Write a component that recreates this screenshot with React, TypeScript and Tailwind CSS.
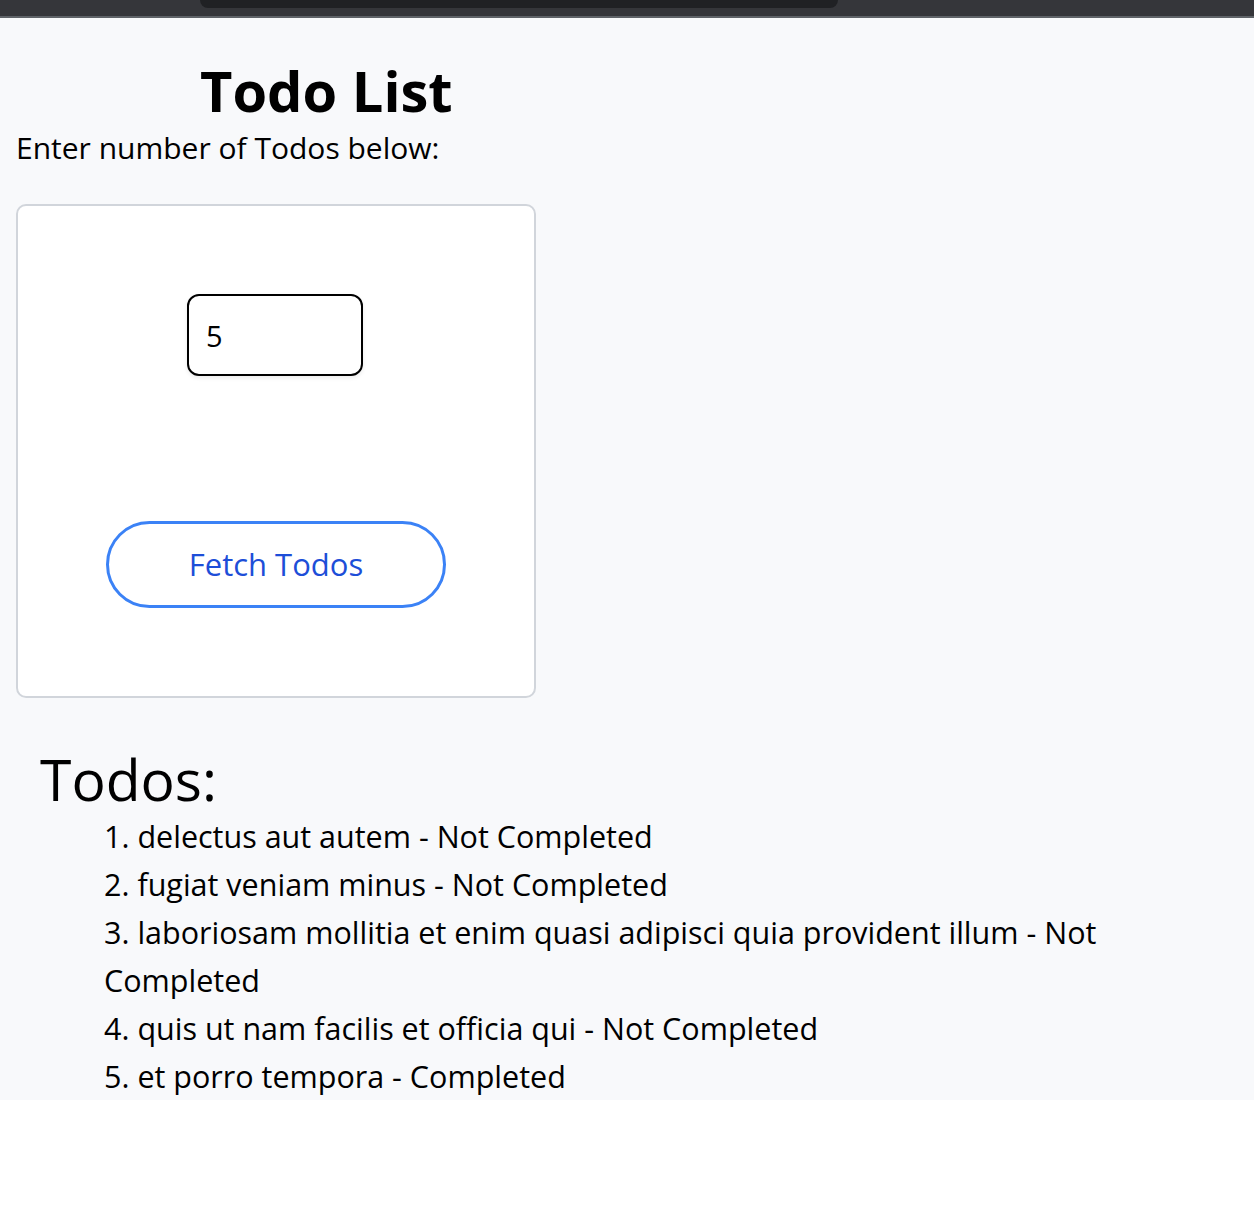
import React from 'react';

const TODOS = [
  { title: 'delectus aut autem', completed: false },
  { title: 'fugiat veniam minus', completed: false },
  { title: 'laboriosam mollitia et enim quasi adipisci quia provident illum', completed: false },
  { title: 'quis ut nam facilis et officia qui', completed: false },
  { title: 'et porro tempora', completed: true },
];

export default function App() {
  return (
    <div className="min-h-[1214px] bg-white text-black font-['Open_Sans',sans-serif]">
      {/* browser chrome strip */}
      <div className="h-[18px] bg-[#35363a] border-b-2 border-[#5f6368] pl-[200px]">
        <div className="w-[638px] h-[8px] bg-[#202124] rounded-b-[10px]"></div>
      </div>

      <div className="bg-[#f8f9fb]">
        <h1 className="pt-[36px] pl-[200px] text-[56px] leading-[72px] font-bold">Todo List</h1>
        <p className="mt-[4px] pl-[16px] text-[30px] leading-[36px]">Enter number of Todos below:</p>

        <div className="mt-[38px] ml-[16px] w-[520px] h-[494px] bg-white border-2 border-[#d1d5db] rounded-[10px] flex flex-col items-center pt-[88px]">
          <input
            type="number"
            defaultValue={5}
            className="-ml-[2px] w-[176px] h-[82px] border-2 border-black rounded-[12px] px-[17px] text-[29px] outline-none shadow-[0_2px_4px_rgba(0,0,0,0.08)] bg-white"
          />
          <button className="mt-[145px] w-[340px] h-[87px] border-[3px] border-[#3b82f6] rounded-full text-[#1d4ed8] text-[31px] font-medium bg-white">
            Fetch Todos
          </button>
        </div>

        <h2 className="mt-[49px] pl-[40px] text-[57px] leading-[64px] font-medium">Todos:</h2>
        <ul className="pt-[1px] pl-[104px] w-[1150px] text-[30.5px] leading-[48px]">
          {TODOS.map((todo, i) => (
            <li key={i}>
              {i + 1}. {todo.title} - {todo.completed ? 'Completed' : 'Not Completed'}
            </li>
          ))}
        </ul>
      </div>
    </div>
  );
}
